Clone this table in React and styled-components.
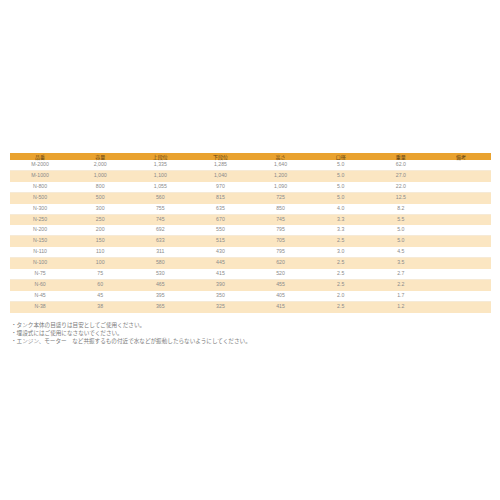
import React from "react";
import styled, { createGlobalStyle } from "styled-components";

const Global = createGlobalStyle`
  html, body { margin: 0; padding: 0; background: #fff; }
  body { font-family: "Liberation Sans", "Noto Sans CJK JP", sans-serif; }
`;

const Page = styled.div`
  width: 500px;
  height: 500px;
  padding: 153px 9px 0 10px;
  box-sizing: border-box;
`;

const Table = styled.table`
  width: 481px;
  border-collapse: collapse;
  table-layout: fixed;
`;

const HeadCell = styled.th`
  background: #e9a22f;
  color: #5e4315;
  font-family: "Noto Sans CJK JP", sans-serif;
  font-weight: 400;
  font-size: 5px;
  height: 7px;
  padding: 0;
  line-height: 7px;
  text-align: center;
`;

const Row = styled.tr`
  background: ${(p) => (p.$alt ? "#fbe6c2" : "#ffffff")};
  border-bottom: 1px solid ${(p) => (p.$alt ? "#fbe6c2" : "#f6ead6")};
`;

const Cell = styled.td`
  height: 9.9px;
  padding: 0;
  font-size: 5.2px;
  line-height: 9.9px;
  color: #8a8a8a;
  text-align: center;
  font-family: "Liberation Sans", "Noto Sans CJK JP", sans-serif;
`;

const Notes = styled.ul`
  list-style: none;
  margin: 8px 0 0 1px;
  padding: 0;
`;

const Note = styled.li`
  font-family: "Noto Sans CJK JP", sans-serif;
  font-size: 5.6px;
  line-height: 8px;
  color: #7a7a7a;
  white-space: nowrap;
`;

const headers = ["品番", "容量", "上段位", "下段位", "高さ", "口径", "重量", "備考"];

const rows = [
  ["M-2000", "2,000", "1,335", "1,285", "1,640", "5.0", "62.0", ""],
  ["M-1000", "1,000", "1,100", "1,040", "1,200", "5.0", "27.0", ""],
  ["N-800", "800", "1,055", "970", "1,090", "5.0", "22.0", ""],
  ["N-500", "500", "560", "815", "725", "5.0", "12.5", ""],
  ["N-300", "300", "755", "635", "850", "4.0", "8.2", ""],
  ["N-250", "250", "745", "670", "745", "3.3", "5.5", ""],
  ["N-200", "200", "692", "550", "795", "3.3", "5.0", ""],
  ["N-150", "150", "633", "515", "705", "2.5", "5.0", ""],
  ["N-110", "110", "311", "430", "795", "3.0", "4.5", ""],
  ["N-100", "100", "580", "445", "620", "2.5", "3.5", ""],
  ["N-75", "75", "530", "415", "520", "2.5", "2.7", ""],
  ["N-60", "60", "465", "390", "455", "2.5", "2.2", ""],
  ["N-45", "45", "395", "350", "405", "2.0", "1.7", ""],
  ["N-38", "38", "365", "325", "415", "2.5", "1.2", ""],
];

const notes = [
  "・タンク本体の目盛りは目安としてご使用ください。",
  "・埋設式にはご使用になさないでください。",
  "・エンジン、モーター　など共振するもの付近で水などが振動したらないようにしてください。",
];

export default function App() {
  return (
    <Page>
      <Global />
      <Table>
        <thead>
          <tr>
            {headers.map((h) => (
              <HeadCell key={h}>{h}</HeadCell>
            ))}
          </tr>
        </thead>
        <tbody>
          {rows.map((r, i) => (
            <Row key={r[0]} $alt={i % 2 === 1}>
              {r.map((c, j) => (
                <Cell key={j}>{c}</Cell>
              ))}
            </Row>
          ))}
        </tbody>
      </Table>
      <Notes>
        {notes.map((n) => (
          <Note key={n}>{n}</Note>
        ))}
      </Notes>
    </Page>
  );
}
